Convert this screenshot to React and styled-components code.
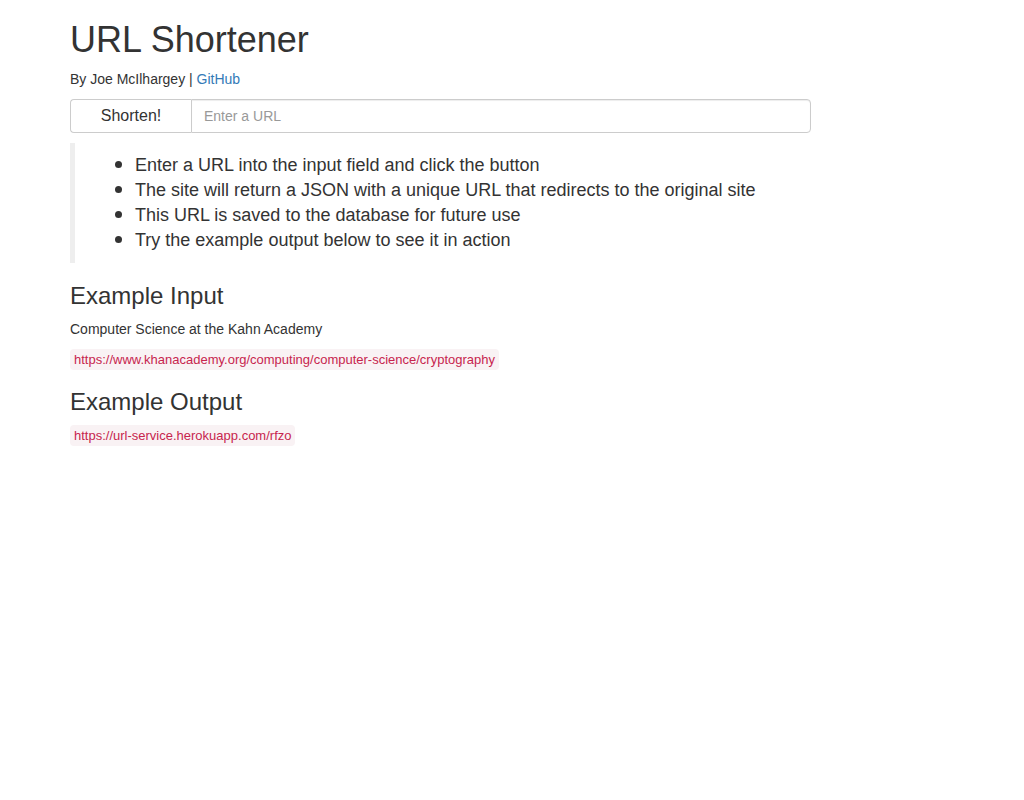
import React, { useState } from "react";
import styled, { createGlobalStyle } from "styled-components";

const GlobalStyle = createGlobalStyle`
  *, *::before, *::after {
    box-sizing: border-box;
  }
  body {
    margin: 0;
    background: #fff;
    color: #333;
    font-family: "Liberation Sans", Arial, sans-serif;
    font-size: 14px;
    line-height: 20px;
  }
`;

const Container = styled.main`
  max-width: 970px;
  margin: 0 auto;
  padding: 0 43px;
`;

const Title = styled.h1`
  margin: 20px 0 10px;
  font-size: 36px;
  font-weight: 400;
  line-height: 39px;
`;

const Heading = styled.h3`
  margin: 20px 0 10px;
  font-size: 24px;
  font-weight: 400;
  line-height: 26px;
`;

const Text = styled.p`
  margin: 0 0 10px;
`;

const Link = styled.a`
  color: #337ab7;
  text-decoration: none;
  &:hover {
    text-decoration: underline;
  }
`;

const Form = styled.form`
  display: flex;
  max-width: 741px;
  margin-bottom: 10px;
`;

const SubmitButton = styled.button`
  flex: none;
  width: 121px;
  padding: 0;
  border: 1px solid #ccc;
  border-right: 0;
  border-radius: 4px 0 0 4px;
  background: #fff;
  color: #333;
  font: inherit;
  font-size: 16px;
  cursor: pointer;
`;

const UrlInput = styled.input`
  flex: 1;
  min-width: 0;
  height: 34px;
  padding: 6px 12px;
  border: 1px solid #ccc;
  border-radius: 0 4px 4px 0;
  background: #fff;
  box-shadow: inset 0 1px 1px rgba(0, 0, 0, 0.075);
  color: #555;
  font: inherit;
  &::placeholder {
    color: #999;
    opacity: 1;
  }
`;

const Instructions = styled.blockquote`
  margin: 0 0 20px;
  padding: 10px 20px;
  border-left: 5px solid #eee;
  font-size: 18px;
  line-height: 25px;
`;

const List = styled.ul`
  margin: 0;
  padding-left: 20px;
  list-style: none;
`;

const Step = styled.li`
  display: flex;
  gap: 13px;
  &::before {
    content: "";
    flex: none;
    width: 7px;
    height: 7px;
    margin-top: 8px;
    border-radius: 50%;
    background: #333;
  }
`;

const Code = styled.code`
  padding: 3px 4px;
  border-radius: 4px;
  background: #f9f2f4;
  color: #c7254e;
  font-family: inherit;
  font-size: 13px;
  line-height: 13px;
`;

const steps = [
  "Enter a URL into the input field and click the button",
  "The site will return a JSON with a unique URL that redirects to the original site",
  "This URL is saved to the database for future use",
  "Try the example output below to see it in action",
];

export default function App() {
  const [url, setUrl] = useState("");

  return (
    <>
      <GlobalStyle />
      <Container>
        <Title>URL Shortener</Title>
        <Text>
          By Joe McIlhargey | <Link href="#github">GitHub</Link>
        </Text>
        <Form onSubmit={(event) => event.preventDefault()}>
          <SubmitButton type="submit">Shorten!</SubmitButton>
          <UrlInput
            type="text"
            aria-label="Enter a URL"
            placeholder="Enter a URL"
            value={url}
            onChange={(event) => setUrl(event.target.value)}
          />
        </Form>
        <Instructions>
          <List>
            {steps.map((step) => (
              <Step key={step}>{step}</Step>
            ))}
          </List>
        </Instructions>
        <Heading>Example Input</Heading>
        <Text>Computer Science at the Kahn Academy</Text>
        <Text>
          <Code>https://www.khanacademy.org/computing/computer-science/cryptography</Code>
        </Text>
        <Heading>Example Output</Heading>
        <Text>
          <Code>https://url-service.herokuapp.com/rfzo</Code>
        </Text>
      </Container>
    </>
  );
}
